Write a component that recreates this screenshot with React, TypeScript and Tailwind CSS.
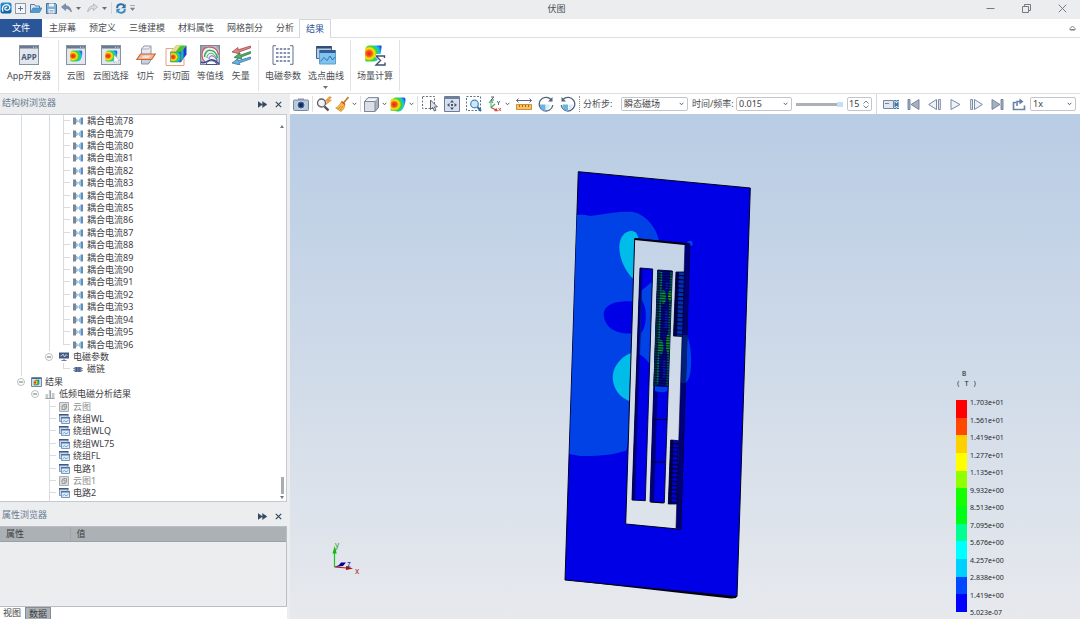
import { useState } from "react";
import type { ReactNode } from "react";

interface SvgProps {
  w: number;
  h: number;
  children: ReactNode;
}

function Svg({ w, h, children }: SvgProps) {
  return (
    <svg width={w} height={h} viewBox={`0 0 ${w} ${h}`} fill="none" className="block shrink-0" aria-hidden="true">
      {children}
    </svg>
  );
}

// Gradients shared by every icon
function Defs() {
  return (
    <svg className="absolute h-0 w-0" aria-hidden="true">
      <defs>
        <radialGradient id="heat" cx="0.25" cy="0.5" r="0.85">
          <stop offset="0" stopColor="#e8201a" />
          <stop offset="0.2" stopColor="#f4571a" />
          <stop offset="0.38" stopColor="#fbe70a" />
          <stop offset="0.55" stopColor="#3fd02c" />
          <stop offset="0.72" stopColor="#12c6e6" />
          <stop offset="1" stopColor="#1a35d8" />
        </radialGradient>
        <linearGradient id="steel" x1="0" y1="0" x2="0" y2="1">
          <stop offset="0" stopColor="#f4f6f9" />
          <stop offset="1" stopColor="#c3cad6" />
        </linearGradient>
        <linearGradient id="logo" x1="0" y1="0" x2="0" y2="1">
          <stop offset="0" stopColor="#2b93d6" />
          <stop offset="1" stopColor="#0c5fa6" />
        </linearGradient>
      </defs>
    </svg>
  );
}

function Caret() {
  return (
    <Svg w={5} h={4}>
      <path d="M0.7 0.8 2.5 2.8 4.3 0.8" stroke="#5d6670" strokeWidth="1" />
    </Svg>
  );
}

function SolidCaret() {
  return (
    <Svg w={5} h={3}>
      <path d="M0 0h5L2.5 3z" fill="#6b7178" />
    </Svg>
  );
}

/* ---------- title bar ---------- */

function TitleBar() {
  return (
    <header className="flex h-[19px] shrink-0 items-start bg-[#ebedef] pt-0.5">
      <div className="flex h-3 w-[140px] items-center">
        <Svg w={12} h={12}>
          <rect x="0.5" y="0.5" width="11" height="11" rx="2" fill="url(#logo)" />
          <path d="M3 9.600C1.400 6.200 3.200 2.600 6.400 2.600c2.300 0 3.600 1.600 3.400 3.400C9.600 8.200 6 9 5 7.200 4.400 5.600 6 4.600 7.200 5.400" stroke="#fff" strokeWidth="1.300" />
        </Svg>
        <button aria-label="新建" className="ml-[3px]">
          <Svg w={11} h={11}>
            <rect x="0.5" y="0.5" width="10" height="10" fill="#f3f5f8" stroke="#8d9bb0" />
            <path d="M5.500 3v5M3 5.500h5" stroke="#5c7496" />
          </Svg>
        </button>
        <button aria-label="打开" className="ml-1">
          <Svg w={12} h={11}>
            <path d="M0.500 9.500V1.500h4l1 1.500h4v2" fill="#dfe7f0" stroke="#5a7a9f" />
            <path d="M0.500 9.500 3 5h9L9.500 9.500z" fill="#4d9dd4" stroke="#3c7fb4" strokeWidth="0.700" />
          </Svg>
        </button>
        <button aria-label="保存" className="ml-1">
          <Svg w={11} h={11}>
            <path d="M0.500 0.500h9l1 1v9h-10z" fill="#7fb0d6" stroke="#46729d" />
            <path d="M3 0.500h5v3H3zM2.500 6h6v4.500h-6z" fill="#eef3f8" />
            <path d="M3.500 7.500h4M3.500 9h4" stroke="#7d97b1" strokeWidth="0.700" />
          </Svg>
        </button>
        <button aria-label="撤销" className="ml-1">
          <Svg w={11} h={10}>
            <path d="M0.500 4 4.500 0.800v2c3.500 0 5.500 2.200 5.800 6.200C8.800 6.500 7.200 5.500 4.500 5.500v2z" fill="#7d93ad" stroke="#60778f" strokeWidth="0.600" />
          </Svg>
        </button>
        <button aria-label="撤销历史" className="ml-1">
          <SolidCaret />
        </button>
        <button aria-label="重做" className="ml-1.5">
          <Svg w={11} h={10}>
            <path d="M10.500 4 6.500 0.800v2C3 2.800 1 5 0.700 9 2.200 6.500 3.800 5.500 6.500 5.500v2z" fill="#d9dde2" stroke="#a5abb3" strokeWidth="0.700" />
          </Svg>
        </button>
        <button aria-label="重做历史" className="ml-1">
          <SolidCaret />
        </button>
        <span className="ml-1 h-3 w-px bg-[#d2d5d9]" />
        <button aria-label="刷新" className="ml-1">
          <Svg w={10} h={11}>
            <path d="M1.200 5V4.500c0-4 6-4 7 -1.500" stroke="#2f6da4" strokeWidth="2" />
            <path d="M9.600 0.800v4.400H5.300z" fill="#2f6da4" />
            <path d="M8.800 6v0.500c0 4-6 4-7 1.500" stroke="#3f8dbf" strokeWidth="2" />
            <path d="M0.400 10.200V5.800h4.300z" fill="#3f8dbf" />
          </Svg>
        </button>
        <button aria-label="自定义快速访问" className="ml-1">
          <Svg w={5} h={6}>
            <path d="M0 0.500h5M0.500 3h4L2.500 5.500z" fill="#7a8087" stroke="#7a8087" strokeWidth="0.600" />
          </Svg>
        </button>
      </div>
      <h1 className="flex-1 text-center text-[9px] leading-[14px] text-[#4a4d50]">伏图</h1>
      <div className="flex h-3 w-[107px] items-center">
        <button aria-label="最小化" className="flex w-9 justify-center">
          <Svg w={9} h={9}>
            <path d="M0.500 4.500h8" stroke="#777b80" />
          </Svg>
        </button>
        <button aria-label="还原" className="flex w-9 justify-center">
          <Svg w={9} h={9}>
            <path d="M0.500 2.500h6v6h-6zM2.500 2.500v-2h6v6h-2" stroke="#777b80" />
          </Svg>
        </button>
        <button aria-label="关闭" className="flex w-9 justify-center">
          <Svg w={9} h={9}>
            <path d="M0.700 0.700l7.600 7.600M8.300 0.700L0.700 8.300" stroke="#777b80" />
          </Svg>
        </button>
      </div>
    </header>
  );
}

/* ---------- menu tabs ---------- */

const menus = ["主屏幕", "预定义", "三维建模", "材料属性", "网格剖分", "分析"];

function MenuTabs() {
  return (
    <nav className="flex h-[19px] shrink-0 border-b border-[#dcdee1] bg-white text-[#4c4e52]">
      <button className="w-[42px] bg-[#2a5699] text-white">文件</button>
      <div className="ml-[7px] flex gap-[13px]">
        {menus.map((m) => (
          <button key={m}>{m}</button>
        ))}
      </div>
      <button className="-mb-px ml-[5px] border border-b-0 border-[#d3d6da] bg-white px-1.5 text-[#2a5699]">结果</button>
      <button aria-label="收起功能区" className="ml-auto pr-1">
        <Svg w={7} h={6}>
          <path d="M1 3.500 3.500 1 6 3.500v1.500H1zM2.200 4.500h2.600" stroke="#6a6f76" strokeWidth="0.900" />
        </Svg>
      </button>
    </nav>
  );
}

/* ---------- ribbon ---------- */

function WindowFrame({ children }: { children: ReactNode }) {
  return (
    <Svg w={20} h={20}>
      <rect x="0.500" y="0.500" width="19" height="19" fill="#e2e6ed" stroke="#8792a3" />
      <path d="M1 1h18v2.500H1z" fill="#6a7991" />
      <path d="M14 2.200h1M16.500 2.200h1" stroke="#dfe5ee" />
      {children}
    </Svg>
  );
}

const heatBlob = "M4 10c0-3 1.500-4.500 4-4.500h6.500c2 0 2 2 1.500 4-.5 4-1.500 7-5.500 7H6c-2 0-2-3-2-6.500z";

const icons: Record<string, ReactNode> = {
  app: (
    <WindowFrame>
      <text x="10" y="14.500" textAnchor="middle" fontSize="8" fontWeight="700" fontFamily="Noto Sans, sans-serif" fill="#4b5d7b">
        APP
      </text>
    </WindowFrame>
  ),
  contour: (
    <WindowFrame>
      <path d={heatBlob} fill="url(#heat)" />
    </WindowFrame>
  ),
  pick: (
    <WindowFrame>
      <path d={heatBlob} fill="url(#heat)" />
      <path d="M13 10v8l2-1.800 1.500 3 1.500-.8-1.400-2.800 2.400-.2z" fill="#fff" stroke="#9aa5b5" strokeWidth="0.500" />
    </WindowFrame>
  ),
  slice: (
    <Svg w={20} h={20}>
      <path d="M5.500 4 8 1h7v13.500L12.500 19h-7z" fill="url(#steel)" stroke="#8a95a8" />
      <path d="M5.500 4h7L15 1" stroke="#a3adbc" />
      <path d="M0.700 14.500 4.500 9h14.800L15.500 14.500z" fill="#f6b491" stroke="#c8673a" strokeWidth="1.200" />
      <path d="M5.500 12.500 8 10.500h6.500l-2 2.500h-7z" fill="#e9e4e6" />
    </Svg>
  ),
  clip: (
    <Svg w={22} h={21}>
      <path d="M5.500 7 11 0.500h10.500L16 7z" fill="#47c52e" />
      <path d="M5.500 7 11 0.500h4.500L10.500 7z" fill="#ecd98a" />
      <path d="M16 7l5.500-6.500v9L16 17z" fill="#1b3dca" />
      <path d="M16 7l2.500-3v9.500L16 17z" fill="#1fb0c8" />
      <path d="M5.500 7H16v10H5.500z" fill="url(#heat)" stroke="#6d7558" strokeWidth="0.600" />
      <path d="M8 3.500H1v17h18v-7" stroke="#e6a283" />
    </Svg>
  ),
  isoline: (
    <Svg w={20} h={20}>
      <rect x="0.500" y="0.500" width="19" height="19" fill="#b4bdca" stroke="#7d899b" />
      <path d="M1 1h6L1 7zM19 1h-3l3 4z" fill="#97a2b3" />
      <path d="M2 10C3 1 16 0 17.500 9v10H5C3 16 2 14 2 10z" fill="#eef4f2" />
      <path d="M5 17C0 12 1 2 9 2c6 0 9 3 9.500 8" stroke="#dc4a50" strokeWidth="1.200" />
      <path d="M4.500 12c0-9 11-9 13 1" stroke="#35a862" strokeWidth="1.500" />
      <path d="M7 13c0-6.500 8-6.500 10 2" stroke="#35a862" />
      <path d="M9 14c0-4.500 6-4.500 8 2" stroke="#7c55c0" />
      <path d="M1 17c6 3 7-4 12-2 2 0 4 2 6 4" stroke="#3246a8" strokeWidth="1.400" />
      <path d="M6 19.500c1-5 9-5 11 0z" fill="#fff" stroke="#2d3a6a" strokeWidth="0.800" />
    </Svg>
  ),
  vector: (
    <Svg w={20} h={20}>
      <path d="M1 7l6-4.500v2.300L19.500 1v2L8 7l1 2z" fill="#e88078" stroke="#8a4550" strokeWidth="0.700" />
      <path d="M3 12.500 9 8v2.300L19.500 6.500v2L10 12l1 2z" fill="#46b368" stroke="#2f6a4a" strokeWidth="0.700" />
      <path d="M1 18l6-4.500v2.300L19.500 12v2L8 18l1 2z" fill="#62b4e8" stroke="#33658e" strokeWidth="0.700" />
    </Svg>
  ),
  matrix: (
    <Svg w={22} h={20}>
      <path d="M4 0.700H1v18.600h3M18 0.700h3v18.600h-3" stroke="#5f6f89" />
      <path d="M4 4h14M4 8h14M4 12h14M4 16h14" stroke="#5a6f97" strokeWidth="1.300" strokeDasharray="2.500 1.300" />
    </Svg>
  ),
  curve: (
    <Svg w={20} h={20}>
      <path d="M0.500 1.500h15v12H0.500z" fill="#b8cbe0" stroke="#48648c" />
      <path d="M0.500 1h15v2.500H0.500z" fill="#324d7d" />
      <path d="M3.500 5.500h16v13.500h-16z" fill="#7fc3ee" stroke="#5f9fd0" />
      <path d="M3.500 5h16v3h-16z" fill="#345c92" />
      <path d="M4.500 16.500 8 12.500l3 3 3-4.500 2.500 4L19 12" stroke="#2e6fae" />
    </Svg>
  ),
  calc: (
    <Svg w={22} h={21}>
      <path d="M1 6c0-4 2-5.500 5-5.500h11c1 0 .5 3-.5 8-1 5-3 8-7 8H2c-1 0-1-4-1-10.500z" fill="url(#heat)" />
      <path d="M12 10.500h9v2.500M12 10.500l4.500 5L12 20h9.200v-2.500" stroke="#fff" strokeWidth="3" />
      <path d="M12 11h8.500v2M12 11l4.500 4.500L12 20h9v-2.500" stroke="#3c4f78" strokeWidth="1.400" />
    </Svg>
  ),
};

interface RibbonItem {
  label: string;
  icon: string;
  menu?: boolean;
}

const ribbon: RibbonItem[][] = [
  [{ label: "App开发器", icon: "app" }],
  [
    { label: "云图", icon: "contour" },
    { label: "云图选择", icon: "pick" },
    { label: "切片", icon: "slice" },
    { label: "剪切面", icon: "clip" },
    { label: "等值线", icon: "isoline" },
    { label: "矢量", icon: "vector" },
  ],
  [
    { label: "电磁参数", icon: "matrix" },
    { label: "选点曲线", icon: "curve", menu: true },
  ],
  [{ label: "场量计算", icon: "calc" }],
];

function Ribbon() {
  return (
    <div className="flex h-14 shrink-0 border-b border-[#dcdee1] bg-white py-0.5 text-[#4c4e52]">
      {ribbon.map((group, i) => (
        <div key={i} className={`flex gap-[7px] border-r border-[#e0e2e5] pt-1 ${i < 2 ? "px-[7px]" : "px-1.5"}`}>
          {group.map((item) => (
            <button key={item.label} className="flex flex-col items-center">
              <span className="flex h-[22px] items-center">{icons[item.icon]}</span>
              <span className="mt-1 leading-3">{item.label}</span>
              {item.menu && (
                <span className="mt-1">
                  <SolidCaret />
                </span>
              )}
            </button>
          ))}
        </div>
      ))}
    </div>
  );
}

/* ---------- tree ---------- */

function PaneTitle({ title }: { title: string }) {
  return (
    <div className="flex items-center pr-[5px] pl-0.5 text-[#6a7a90]">
      <h2>{title}</h2>
      <button aria-label={title + "停靠"} className="mt-0.5 ml-auto">
        <Svg w={9} h={7}>
          <path d="M0 0.500 4.500 3.500 0 6.500zM4.500 0.500 9 3.500 4.500 6.500z" fill="#34495f" stroke="#34495f" strokeWidth="0.400" />
        </Svg>
      </button>
      <button aria-label={title + "关闭"} className="mt-0.5 ml-2">
        <Svg w={7} h={7}>
          <path d="M0.800 0.800l5.400 5.400M6.200 0.800L0.800 6.200" stroke="#34495f" strokeWidth="1.200" />
        </Svg>
      </button>
    </div>
  );
}

const treeIcons: Record<string, ReactNode> = {
  coupling: (
    <Svg w={10} h={8}>
      <path d="M0 0.500h3v7H0z" fill="#7b8794" />
      <path d="M7.500 0.500H10v7H7.500z" fill="#5f8fba" />
      <path d="M3.500 2v4L5 4zM7 2v4L5.500 4z" fill="#a9cdea" stroke="#6aa9d8" strokeWidth="0.500" />
    </Svg>
  ),
  monitor: (
    <Svg w={10} h={9}>
      <path d="M0 0.500h10v6H0z" fill="#44597f" />
      <path d="M1.500 4 3 3.500 4 2l1.500 3L7 2.500 8.500 4" stroke="#dbe6f4" strokeWidth="0.800" />
      <path d="M5 6.500V9M2.500 8.500h5" stroke="#6b7d9b" />
    </Svg>
  ),
  chain: (
    <Svg w={10} h={7}>
      <path d="M0 2.500h10M0 4.500h10" stroke="#7486a6" strokeWidth="0.800" />
      <rect x="1.500" y="1" width="7" height="5" fill="#6a7ea5" />
      <path d="M3.500 1v5M6 1v5" stroke="#465a82" />
    </Svg>
  ),
  result: (
    <Svg w={11} h={10}>
      <path d="M0.500 0.500h10v9h-10z" fill="#d7dfec" stroke="#6f86ad" />
      <path d="M1 1h9v1H1z" fill="#4a648f" />
      <path d="M3 4.500 4.500 3H8v3.500L7 8H3z" fill="url(#heat)" stroke="#3b6a35" strokeWidth="0.500" />
    </Svg>
  ),
  bars: (
    <Svg w={10} h={10}>
      <path d="M0.500 5h2.500v5H0.500zM3.800 1h2.400v9H3.800zM7 4h2.500v6H7z" fill="#c6c9cd" />
      <path d="M5.500 2v7M0.500 9.500h9" stroke="#9da2a8" />
    </Svg>
  ),
  gray: (
    <Svg w={10} h={10}>
      <path d="M0.500 0.500h9v9h-9z" fill="#dcdddf" stroke="#aaaeb2" />
      <path d="M3 4h3v3.500H3zM3 4l1.500-1.500H7.500V6L6 7.500" stroke="#85898e" strokeWidth="0.800" />
    </Svg>
  ),
  plot: (
    <Svg w={11} h={10}>
      <path d="M0.500 0.500h8.500v7H0.500z" fill="#c8d6e8" stroke="#8298b8" />
      <path d="M0 0h9.500v1.500H0z" fill="#40577f" />
      <path d="M2.500 3.500h8v6h-8z" fill="#dcebf8" stroke="#7699c2" />
      <path d="M2 3h9v1.500H2z" fill="#55729c" />
      <path d="M3.500 8 5.500 6.500 7 8 9.500 6" stroke="#4a8ac4" strokeWidth="0.700" />
    </Svg>
  ),
};

interface TreeRow {
  // one character per indent level: | line, T branch, L last branch, o toggle
  guide: string;
  icon: string;
  label: string;
  muted?: boolean;
}

const rows: TreeRow[] = [
  ...Array.from({ length: 19 }, (_, i) => ({
    guide: i === 18 ? "| |L" : "| |T",
    icon: "coupling",
    label: `耦合电流${78 + i}`,
  })),
  { guide: "| o", icon: "monitor", label: "电磁参数" },
  { guide: "|  L", icon: "chain", label: "磁链" },
  { guide: "o", icon: "result", label: "结果" },
  { guide: " o", icon: "bars", label: "低频电磁分析结果" },
  { guide: "  T", icon: "gray", label: "云图", muted: true },
  { guide: "  T", icon: "plot", label: "绕组WL" },
  { guide: "  T", icon: "plot", label: "绕组WLQ" },
  { guide: "  T", icon: "plot", label: "绕组WL75" },
  { guide: "  T", icon: "plot", label: "绕组FL" },
  { guide: "  T", icon: "plot", label: "电路1" },
  { guide: "  T", icon: "gray", label: "云图1", muted: true },
  { guide: "  T", icon: "plot", label: "电路2" },
  { guide: "  |", icon: "plot", label: "" },
];

function Guide({ kind }: { kind: string }) {
  if (kind === "o") {
    return (
      <button aria-label="折叠" className="flex w-3.5 items-center justify-center">
        <Svg w={8} h={8}>
          <circle cx="4" cy="4" r="3.500" fill="#fff" stroke="#a9adb2" strokeWidth="0.800" />
          <path d="M2 4h4" stroke="#6d7278" />
        </Svg>
      </button>
    );
  }
  if (kind === " ") return <span className="w-3.5" />;
  return (
    <span className="flex w-3.5 flex-col pl-[7px]">
      <span className={`h-1/2 border-l border-[#d9dbde] ${kind === "|" ? "" : "border-b"}`} />
      <span className={`h-1/2 border-[#d9dbde] ${kind === "L" ? "" : "border-l"}`} />
    </span>
  );
}

function TreePane() {
  return (
    <section className="flex min-h-0 flex-1 flex-col">
      <div className="flex h-5 shrink-0 flex-col pt-0.5">
        <PaneTitle title="结构树浏览器" />
      </div>
      <div className="flex min-h-0 flex-1 overflow-hidden border border-l-0 border-[#c5cad0] bg-white">
        <ul className="grid h-[397px] flex-1 auto-rows-fr pl-3.5 text-[#3d4043]">
          {rows.map((row, i) => (
            <li key={i} className="flex min-h-0">
              {row.guide.split("").map((kind, k) => (
                <Guide key={k} kind={kind} />
              ))}
              <span className={`flex items-center gap-1 pl-[3px] leading-3 ${row.muted ? "text-[#8b8e92]" : ""}`}>
                <span className="w-2.5">{treeIcons[row.icon]}</span>
                {row.label}
              </span>
            </li>
          ))}
        </ul>
        <div className="flex w-2 flex-col items-center pt-2.5 pb-0.5">
          <Svg w={4} h={3}>
            <path d="M0 3h4L2 0z" fill="#6c7a88" />
          </Svg>
          <span className="mt-auto h-[17px] w-[3px] bg-[#a9adb2]" />
          <span className="mt-0.5">
            <Svg w={4} h={3}>
              <path d="M0 0h4L2 3z" fill="#6c7a88" />
            </Svg>
          </span>
        </div>
      </div>
    </section>
  );
}

function PropertyPane() {
  return (
    <section className="shrink-0">
      <div className="flex h-6 flex-col pt-1.5">
        <PaneTitle title="属性浏览器" />
      </div>
      <div className="h-[81px] border border-l-0 border-[#b9bec4]">
        <table className="w-full table-fixed border-collapse bg-[#acb1b5] text-left text-[#3d4043]">
          <thead>
            <tr className="h-3.5 border-b border-[#9ba1a7] leading-3">
              <th className="w-[70px] border-r border-[#a0a5aa] pl-1.5 font-normal">属性</th>
              <th className="pl-1.5 font-normal">值</th>
            </tr>
          </thead>
        </table>
      </div>
      <div className="flex h-3 bg-white leading-3 text-[#3d4043]">
        <button className="px-[3px]">视图</button>
        <button className="ml-px border border-b-0 border-[#888d93] bg-[#acb1b5] px-[3px] leading-[11px]">数据</button>
      </div>
    </section>
  );
}

/* ---------- view toolbar ---------- */

function ToolButton({ label, children, menu }: { label: string; children: ReactNode; menu?: boolean }) {
  return (
    <button aria-label={label} className="flex h-4 shrink-0 items-center gap-[3px]">
      {children}
      {menu && <Caret />}
    </button>
  );
}

function Divider() {
  return <span className="h-4 w-px shrink-0 bg-[#dcdfe3]" />;
}

function Dropdown({ id, options, className }: { id: string; options: string[]; className: string }) {
  return (
    <span className={`grid shrink-0 items-center ${className}`}>
      <select id={id} aria-label={id} className="col-start-1 row-start-1 h-3.5 w-full appearance-none rounded-xs border border-[#c2c6cb] bg-white pl-0.5 leading-3 text-[#3d4043]">
        {options.map((o) => (
          <option key={o}>{o}</option>
        ))}
      </select>
      <span className="pointer-events-none col-start-1 row-start-1 justify-self-end pr-1">
        <Caret />
      </span>
    </span>
  );
}

const playback: { label: string; art: ReactNode }[] = [
  { label: "首帧", art: <path d="M1 1.500h2v10H1zM12 1.500v10L4 6.500z" /> },
  { label: "上一帧", art: <path d="M8.500 1.500v10L0.700 6.500zM10.500 1.500h1.800v10h-1.800z" fill="#eef1f6" /> },
  { label: "播放", art: <path d="M2 1.500v10L11 6.500z" fill="#eef1f6" /> },
  { label: "下一帧", art: <path d="M4.500 1.500v10L12.300 6.500zM0.700 1.500h1.800v10H0.700z" fill="#eef1f6" /> },
  { label: "末帧", art: <path d="M10 1.500h2v10h-2zM1 1.500v10L9 6.500z" /> },
];

function ViewToolbar() {
  const [frame, setFrame] = useState(15);
  return (
    <div className="flex h-5 shrink-0 items-center bg-white pl-[3px] text-[#4c4e52]">
      <div className="flex items-center gap-[3px]">
        <ToolButton label="截图">
          <Svg w={16} h={13}>
            <rect x="0.500" y="2" width="15" height="10.500" rx="1" fill="#b9c8da" stroke="#7389a5" />
            <path d="M5 2V0.500h6V2" fill="#8495ac" />
            <circle cx="8" cy="7" r="4" fill="#3f5e93" stroke="#fff" strokeWidth="0.700" />
            <circle cx="8" cy="7" r="2" fill="#122a58" />
          </Svg>
        </ToolButton>
        <Divider />
        <ToolButton label="快速查询">
          <Svg w={16} h={16}>
            <circle cx="5.500" cy="7" r="4" fill="#eff3f7" stroke="#5b6167" strokeWidth="1.300" />
            <path d="M8.500 10.500l4 4" stroke="#4b5055" strokeWidth="2.400" />
            <path d="M13.500 0.500 9 5h2.500L10 8.500 15.500 4H12.500l3-2.500z" fill="#f2a43c" stroke="#d27f24" strokeWidth="0.500" />
          </Svg>
        </ToolButton>
        <ToolButton label="清除" menu>
          <Svg w={14} h={16}>
            <path d="M13.500 1 8.500 7" stroke="#c07a35" strokeWidth="1.800" />
            <path d="M6.500 5.500 10 8.500C9.500 12 8 14 6 15.500L0.700 12C3 11 5 9 6.500 5.500z" fill="#f7b946" stroke="#c98429" strokeWidth="0.700" />
            <path d="M6.500 5.500 10 8.500" stroke="#d2452b" strokeWidth="1.200" />
            <path d="M3 13l3-3M4.500 14.500 8 10" stroke="#c98429" strokeWidth="0.700" />
          </Svg>
        </ToolButton>
        <Divider />
        <ToolButton label="显示模式" menu>
          <Svg w={15} h={15}>
            <path d="M0.500 4.500 4 0.700h10.500v9.800L11 14.500H0.500z" fill="#aab2bf" stroke="#6f7b8d" />
            <path d="M0.500 4.500H11v10H0.500z" fill="#dbe0e7" stroke="#7d889a" />
            <path d="M1.500 4 4.500 1.200h9L11 4z" fill="#f2f4f7" />
          </Svg>
        </ToolButton>
        <ToolButton label="云图样式" menu>
          <Svg w={16} h={15}>
            <path d="M0.500 3 5 0.500h8.500c2 0 2 1.500 2 3-.5 3-1 6-3 8.500-1 2-3 2.500-5 2.500l-7-1z" fill="url(#heat)" />
          </Svg>
        </ToolButton>
        <Divider />
      </div>
      <div className="ml-1 flex items-center gap-1.5">
        <ToolButton label="框选">
          <Svg w={16} h={16}>
            <path d="M0.500 0.500h12v12h-12z" stroke="#69727c" strokeDasharray="2 1.500" />
            <path d="M8.500 4v9.500l2.200-2 1.600 3.500 1.700-.8-1.600-3.300h3z" fill="#dfe3e8" stroke="#4f575f" strokeWidth="0.900" />
          </Svg>
        </ToolButton>
        <ToolButton label="居中显示">
          <Svg w={16} h={16}>
            <path d="M0.500 0.500h15v15H0.500z" fill="#d9dfe9" stroke="#6b7d9a" />
            <path d="M1 1h14v2H1z" fill="#6d80a0" />
            <path d="M8 4 10 6.500H6zM8 14l2-2.500H6zM3 9l2.500-2v4zM13 9l-2.500-2v4zM7 8h2v2H7z" fill="#3f5377" />
          </Svg>
        </ToolButton>
        <ToolButton label="区域缩放">
          <Svg w={16} h={16}>
            <path d="M0.500 0.500h14v14h-14z" stroke="#5a7292" strokeDasharray="2 1.500" />
            <circle cx="8.500" cy="8" r="3.800" fill="#cfe6f7" stroke="#3d87bb" strokeWidth="1.200" />
            <path d="M11.500 11l3.500 4" stroke="#2d6da3" strokeWidth="2" />
          </Svg>
        </ToolButton>
        <ToolButton label="坐标视角" menu>
          <Svg w={14} h={16}>
            <path d="M3 5.500v6" stroke="#3fae66" />
            <path d="M1 7 3 4.500 5 7M3 11.500 7 8" stroke="#3fae66" strokeWidth="1.100" />
            <path d="M3 11.500 9 14.500M6.500 14.500H9l-1-2" stroke="#d84338" strokeWidth="1.300" />
            <path d="M3 1h3L3 4h3" stroke="#4a4e53" strokeWidth="0.900" />
            <path d="M9 5l1.500 2L12 5M10.500 7v2" stroke="#55595e" strokeWidth="0.900" />
            <path d="M10.500 12l2.500 3M13 12l-2.500 3" stroke="#d84338" strokeWidth="0.900" />
          </Svg>
        </ToolButton>
        <ToolButton label="测量">
          <Svg w={16} h={12}>
            <path d="M0.500 2.500h15M2.500 0.500l-2 2 2 2M13.500 0.500l2 2-2 2" stroke="#5d6b7c" />
            <path d="M0.500 6.500h15v5H0.500z" fill="#f8c268" stroke="#cf8f2f" />
            <path d="M3.500 7v2M6.500 7v2M9.500 7v2M12.500 7v2" stroke="#a06a1e" />
          </Svg>
        </ToolButton>
        <ToolButton label="逆时针旋转">
          <Svg w={16} h={16}>
            <path d="M13 3.500A6.800 6.800 0 1 0 14.800 9" stroke="#51627a" strokeWidth="1.300" />
            <path d="M14.500 1v4.500H10z" fill="#51627a" />
            <path d="M7.500 8.500V15C4.500 15 2 12.500 1.800 8.500z" fill="#67b5e2" />
            <path d="M8 8.500V14c2 0 4-2 4.500-5.500z" fill="#d8ebf7" />
          </Svg>
        </ToolButton>
        <ToolButton label="顺时针旋转">
          <Svg w={16} h={16}>
            <path d="M3 3.500A6.800 6.800 0 1 1 1.200 9" stroke="#51627a" strokeWidth="1.300" />
            <path d="M1.500 1v4.500H6z" fill="#51627a" />
            <path d="M8 8.500V15c-3 0-5-2.500-5.500-6.500z" fill="#67b5e2" />
            <path d="M8.500 8.500V14c2 0 4-2 4.500-5.500z" fill="#d8ebf7" />
          </Svg>
        </ToolButton>
      </div>
      <span className="ml-[3px] h-4 border-l border-dotted border-[#8b9096]" />
      <label htmlFor="分析步" className="ml-[3px] w-[38px] shrink-0">
        分析步:
      </label>
      <Dropdown id="分析步" options={["瞬态磁场", "静态磁场"]} className="w-[67px]" />
      <label htmlFor="时间频率" className="ml-1 w-11 shrink-0 whitespace-nowrap">
        时间/频率:
      </label>
      <Dropdown id="时间频率" options={["0.015", "0.010", "0.005"]} className="w-14" />
      <input
        type="range"
        aria-label="帧"
        min={0}
        max={15}
        value={frame}
        onChange={(e) => setFrame(Number(e.target.value))}
        className="ml-1 h-[3px] w-[47px] shrink-0 appearance-none bg-[#adb1b6] [&::-webkit-slider-thumb]:h-[5px] [&::-webkit-slider-thumb]:w-1.5 [&::-webkit-slider-thumb]:appearance-none [&::-webkit-slider-thumb]:bg-[#c5dff8]"
      />
      <span className="ml-1 flex h-3.5 w-[25px] shrink-0 items-center rounded-xs border border-[#c2c6cb]">
        <input
          aria-label="帧序号"
          value={frame}
          onChange={(e) => setFrame(Number(e.target.value) || 0)}
          className="w-3.5 min-w-0 pl-px text-[#3d4043] outline-none"
        />
        <span className="ml-auto flex flex-col gap-px pr-0.5">
          <button aria-label="增加" onClick={() => setFrame(frame + 1)}>
            <Svg w={6} h={4}>
              <path d="M0.500 3.500 3 1l2.500 2.500" stroke="#7b838b" />
            </Svg>
          </button>
          <button aria-label="减少" onClick={() => setFrame(frame - 1)}>
            <Svg w={6} h={4}>
              <path d="M0.500 0.500 3 3 5.500 0.500" stroke="#7b838b" />
            </Svg>
          </button>
        </span>
      </span>
      <span className="ml-1 h-5 w-px shrink-0 bg-[#d5d8dc]" />
      <div className="ml-1.5 flex items-center gap-2">
        <ToolButton label="录制">
          <Svg w={16} h={11}>
            <path d="M0.500 1.500h10v8h-10z" fill="#e3e7ed" stroke="#76869e" />
            <path d="M2 4.500h4" stroke="#76869e" />
            <path d="M11 1.500h2l.5 1 .5-1h2M11 9.500h2l.5-1 .5 1h2" stroke="#3d76ab" />
            <path d="M12 2.500v6M15 2.500v6M12 3.500l3 4M15 3.500l-3 4" stroke="#3d76ab" strokeWidth="1.200" />
          </Svg>
        </ToolButton>
        {playback.map((p) => (
          <ToolButton key={p.label} label={p.label}>
            <Svg w={13} h={13}>
              <g fill="#a7b0bf" stroke="#6d7e99" strokeWidth="0.900">
                {p.art}
              </g>
            </Svg>
          </ToolButton>
        ))}
        <ToolButton label="循环">
          <Svg w={14} h={13}>
            <path d="M4 4.500H1.500v7h11v-4" stroke="#6d86a8" strokeWidth="1.700" />
            <path d="M5 8V3.500h3" stroke="#5f7ca2" strokeWidth="1.500" />
            <path d="M7.500 0.500 11.500 3.500 7.500 6.500z" fill="#5f7ca2" />
          </Svg>
        </ToolButton>
      </div>
      <Dropdown id="播放速度" options={["1x", "2x", "4x"]} className="ml-1 w-[46px]" />
    </div>
  );
}

/* ---------- 3d viewport ---------- */

function Model() {
  return (
    <svg viewBox="290 114 790 505" className="h-full w-full" role="img" aria-label="磁场云图">
      <defs>
        <linearGradient id="sky" gradientUnits="userSpaceOnUse" x1="0" y1="114" x2="0" y2="619">
          <stop offset="0" stopColor="#b8cce4" />
          <stop offset="1" stopColor="#e7e9ed" />
        </linearGradient>
        <pattern id="turns" width="30" height="2.600" patternUnits="userSpaceOnUse" patternTransform="rotate(4)">
          <path d="M0 0.700h30" stroke="#000018" strokeWidth="1.300" strokeOpacity="0.850" />
        </pattern>
        <pattern id="blocks" width="30" height="4.200" patternUnits="userSpaceOnUse" patternTransform="rotate(4)">
          <path d="M0 0.500h30" stroke="#00001c" strokeWidth="1.200" />
        </pattern>
        <clipPath id="barA">
          <path d="M640 268 652.700 269 645.300 500.700 632 500z" />
        </clipPath>
        <clipPath id="coil">
          <path d="M657.700 270 672.300 271 668 387 653.500 386z" />
        </clipPath>
      </defs>

      {/* core plate */}
      <path d="M565 580 737 596 736 598 731 598.500 690 594z" fill="#000010" />
      <path d="M578.300 171.700 750.300 188 737 596.500 565 580z" fill="#0000e6" stroke="#00001c" strokeWidth="1" />
      <path
        d="M577 215C587 214 588 217 594 215.500 606 213.500 618 211.500 630 211.700 646 212.500 658 230 659 242L645 330 626.500 450.500C610 456 594 456 580 456L569.500 454z"
        fill="#0042e6"
      />
      <path d="M632.700 278.500C626 272 619.500 260 619.300 247 619.500 233 630 228 636 232.500L639 239z" fill="#00bce8" />
      <path d="M631 353C619 358 612.500 368 612.700 378 613.500 390 620 397 629 401z" fill="#00bce8" />
      <path d="M633 301.500C620 300 604 303 603.700 314 604 328 617 334.500 632 333.500z" fill="#0000e6" />
      <circle cx="690" cy="243.500" r="2.700" fill="#0042e6" />
      <path d="M687 335C693 350 693 382 684 383.500z" fill="#0042e6" />

      {/* window */}
      <path d="M634.700 238.700 689.500 244 680.700 529.300 625.700 524z" fill="url(#sky)" stroke="#00001c" strokeWidth="1" />
      <path d="M634.700 239 689.500 244.500" stroke="#000010" strokeWidth="1.800" />
      <path d="M685 244 690 244.500 680.700 529 676 528.500z" fill="#00007a" stroke="#000030" strokeWidth="0.600" />
      <path d="M682.500 335 687.500 335 686 383 681 383z" fill="#00217a" />

      {/* first winding */}
      <g clipPath="url(#barA)">
        <path d="M630 260h25v245h-25z" fill="#0000e6" />
        <path d="M653 281 641 291 638 354C643 355 647 360 651 366z" fill="#0042e6" />
        <path d="M638 297C649 302 648 332 638 335z" fill="#0000e6" />
        <path d="M639.500 267 642.500 267 635 502 631 502z" fill="#00007a" />
        <path d="M641 292 642 292 640 355 639 355z" fill="#00217a" />
      </g>
      <path d="M640 268 652.700 269 645.300 500.700 632 500z" fill="none" stroke="#000028" strokeWidth="0.900" />

      {/* second winding */}
      <path d="M657.700 270 672.300 271 664.300 502.700 650 501.700z" fill="#0000e6" stroke="#000028" strokeWidth="0.900" />
      <path d="M657.700 270 661.500 270.500 654 502 650 501.700z" fill="#00007a" />
      <path d="M655 386 667.500 387 667.300 391C663 393 658 392 655 391z" fill="#0042e6" />
      <path d="M653 419.500h14M651.500 462h14M650.500 502l13 1" stroke="#000018" strokeWidth="1" />
      <g clipPath="url(#coil)">
        <path d="M650 265h26v126h-26z" fill="#0008a0" />
        <path d="M659 270 655 387" stroke="#003c50" strokeWidth="5" />
        <path d="M661.500 272 657.500 384" stroke="#009878" strokeWidth="1.500" />
        <path d="M671.300 272 667.500 386" stroke="#006a5a" strokeWidth="2.500" />
        <ellipse cx="663.500" cy="297" rx="2.500" ry="7" fill="#00a848" />
        <ellipse cx="670" cy="296" rx="2" ry="5" fill="#1cc01c" />
        <ellipse cx="661" cy="347" rx="2.500" ry="7" fill="#00a848" />
        <ellipse cx="668" cy="344" rx="2" ry="10" fill="#10a830" />
        <path d="M667 282v8M666.500 310l-.5 18M664.500 360l-.5 18" stroke="#0020e0" strokeWidth="2.500" />
        <path d="M650 265h26v126h-26z" fill="url(#turns)" />
      </g>

      {/* third winding, two halves */}
      <path d="M676 272 684.500 272 682.500 336.500 673.500 336z" fill="#0030c0" stroke="#000018" strokeWidth="0.800" />
      <path d="M676 272 679 272 677 336 673.500 336z" fill="#000050" />
      <path d="M676 272 684.500 272 682.500 336.500 673.500 336z" fill="url(#blocks)" />
      <path d="M670.700 440 678.500 440.700 676.700 504 668.300 504z" fill="#0000d8" stroke="#000018" strokeWidth="0.800" />
      <path d="M670.700 440 673.500 440 671.500 504 668.300 504z" fill="#000050" />
      <path d="M670.700 440 678.500 440.700 676.700 504 668.300 504z" fill="url(#blocks)" />
    </svg>
  );
}

function Axes() {
  return (
    <svg width="32" height="36" viewBox="0 0 32 36" className="absolute bottom-[43px] left-[41px]" aria-hidden="true">
      <path d="M3.500 27V10" stroke="#1fc41f" strokeWidth="1.200" />
      <path d="M1.500 13.500 3.700 6l2 7.500z" fill="#12b812" />
      <path d="M3.500 27 16 28" stroke="#c01818" strokeWidth="1.200" />
      <path d="M15 26 22 28.500 15 30z" fill="#a01010" />
      <path d="M3.500 27 8 25 10 22.500h5L12 26z" fill="#00008c" />
      <g fontFamily="Noto Sans, sans-serif" fontSize="8">
        <text x="4" y="8" fill="#1f9c1f">y</text>
        <text x="16" y="27" fill="#2424a8">z</text>
        <text x="24" y="34" fill="#b01c1c">x</text>
      </g>
    </svg>
  );
}

const legendColors = ["bg-[#ff0000]", "bg-[#ff4800]", "bg-[#ffd000]", "bg-[#ffff00]", "bg-[#90ff00]", "bg-[#14ff00]", "bg-[#00ff14]", "bg-[#00ff90]", "bg-[#00ffff]", "bg-[#00d0ff]", "bg-[#0048ff]", "bg-[#0000ff]"];

const legendValues = ["1.703e+01", "1.561e+01", "1.419e+01", "1.277e+01", "1.135e+01", "9.932e+00", "8.513e+00", "7.095e+00", "5.676e+00", "4.257e+00", "2.838e+00", "1.419e+00", "5.023e-07"];

function Legend() {
  return (
    <div className="absolute right-[76px] bottom-0.5 text-[#26282b]">
      <div className="mb-2.5 w-4 text-center font-['DejaVu_Sans_Mono',monospace] text-[7px] leading-[10px] whitespace-nowrap">
        <p>B</p>
        <p>(&nbsp;T&nbsp;)</p>
      </div>
      <div className="flex h-[218px] gap-[3px] text-[7px] leading-2">
        <div className="mt-px flex h-[212px] w-[11px] flex-col">
          {legendColors.map((c) => (
            <span key={c} className={`flex-1 ${c}`} />
          ))}
        </div>
        <ul className="flex w-[34px] flex-col justify-between whitespace-nowrap">
          {legendValues.map((v) => (
            <li key={v}>{v}</li>
          ))}
        </ul>
      </div>
    </div>
  );
}

export default function App() {
  return (
    <div className="flex h-screen flex-col overflow-hidden bg-[#ebedef] font-['Noto_Sans','Noto_Sans_CJK_SC',sans-serif] text-[9px] leading-[14px]">
      <Defs />
      <TitleBar />
      <MenuTabs />
      <Ribbon />
      <main className="flex min-h-0 flex-1">
        <aside className="flex w-[287px] shrink-0 flex-col">
          <TreePane />
          <PropertyPane />
        </aside>
        <div className="ml-[3px] flex min-w-0 flex-1 flex-col">
          <ViewToolbar />
          <div className="relative min-h-0 flex-1 bg-linear-to-b from-[#b8cce4] to-[#e7e9ed]">
            <Model />
            <Axes />
            <Legend />
          </div>
        </div>
      </main>
    </div>
  );
}
